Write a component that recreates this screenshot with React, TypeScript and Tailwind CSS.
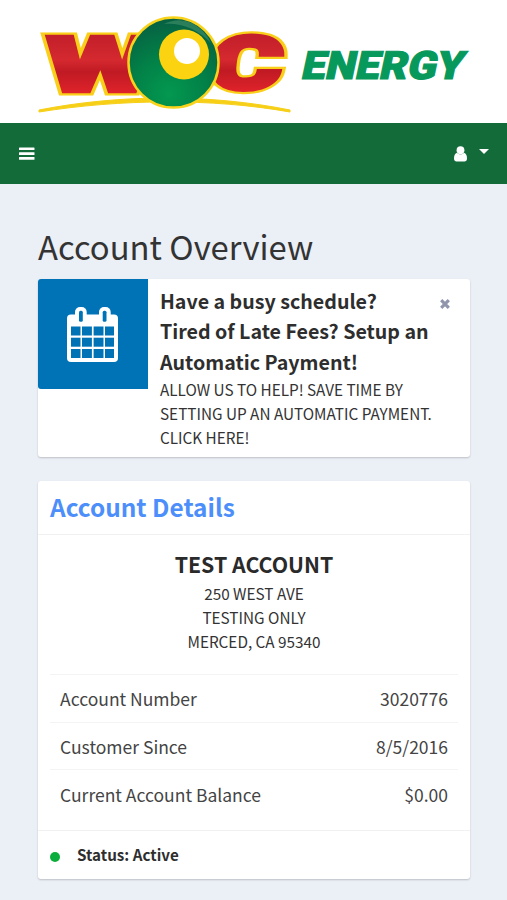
const details = [
  { label: "Account Number", value: "3020776" },
  { label: "Customer Since", value: "8/5/2016" },
  { label: "Current Account Balance", value: "$0.00" },
];

function LogoLetters() {
  return (
    <>
      <text x="0" y="0" fontSize="76" textLength="109" lengthAdjust="spacingAndGlyphs" transform="translate(45 90.500) skewX(-3)">
        W
      </text>
      <text x="0" y="0" fontSize="74" textLength="72" lengthAdjust="spacingAndGlyphs" transform="translate(207 89) skewX(-8)">
        C
      </text>
    </>
  );
}

function Logo() {
  return (
    <svg width="507" height="123" viewBox="0 0 507 123" role="img" aria-label="WOC Energy" className="block">
      <defs>
        <linearGradient id="red" x1="0" y1="0" x2="0" y2="1">
          <stop offset="0.2" stopColor="#c4202b" />
          <stop offset="0.45" stopColor="#d5292f" />
          <stop offset="0.58" stopColor="#c01a24" />
          <stop offset="0.85" stopColor="#e3242b" />
        </linearGradient>
        <radialGradient id="ball" cx="0.45" cy="0.85" r="0.85">
          <stop offset="0" stopColor="#039850" />
          <stop offset="0.5" stopColor="#028047" />
          <stop offset="1" stopColor="#075f42" />
        </radialGradient>
      </defs>
      <path d="M39 110C120 94 211 94 290 110L290 112C212 98 120 99 39 112Z" fill="#f6cf16" stroke="#f6cf16" strokeWidth="1" />
      <g fontFamily="Roboto, sans-serif" fontWeight="900">
        <g fill="#f9cf19" stroke="#f9cf19" strokeWidth="9" aria-hidden="true">
          <LogoLetters />
        </g>
        <g fill="url(#red)" stroke="url(#red)" strokeWidth="4.500">
          <LogoLetters />
        </g>
      </g>
      <ellipse cx="173.500" cy="62.500" rx="45" ry="45" fill="url(#ball)" stroke="#f9d31b" strokeWidth="2.500" />
      <path d="M164 24Q178 17 192 23Q206 31 211 43Q190 22 164 24Z" fill="#4f9a72" opacity="0.5" />
      <circle cx="184" cy="54.500" r="25" fill="#fbd310" />
      <circle cx="187" cy="51" r="13" fill="#fff" />
      <text
        x="0"
        y="0"
        fontFamily="Roboto, sans-serif"
        fontWeight="900"
        fontSize="39"
        textLength="162"
        lengthAdjust="spacingAndGlyphs"
        transform="translate(300 78.500) skewX(-12)"
        fill="#07985b"
        stroke="#07985b"
        strokeWidth="1.200"
      >
        ENERGY
      </text>
    </svg>
  );
}

function CalendarIcon() {
  return (
    <svg width="51" height="55" viewBox="0 0 51 55" className="-translate-x-px">
      <rect x="0" y="7.500" width="51" height="47.500" rx="4" fill="#fff" />
      <rect x="8" y="0" width="11.700" height="17" rx="5" fill="#fff" />
      <rect x="32" y="0" width="11.700" height="17" rx="5" fill="#fff" />
      <g fill="#0073b7">
        <rect x="12" y="3.700" width="3.800" height="11" rx="1.500" />
        <rect x="35.700" y="3.700" width="3.800" height="11" rx="1.500" />
        {[19.5, 30.7, 42].map((y) => (
          <g key={y}>
            <rect x="4" y={y} width="9.500" height="9" />
            <rect x="15" y={y} width="9.900" height="9" />
            <rect x="26.600" y={y} width="9.900" height="9" />
            <rect x="38" y={y} width="9" height="9" />
          </g>
        ))}
      </g>
    </svg>
  );
}

function NavBar() {
  return (
    <nav className="flex h-[61px] items-center justify-between bg-[#136b3a] pl-[19px] pr-[18px]">
      <button aria-label="Toggle navigation">
        <svg width="16" height="14" viewBox="0 0 16 14" fill="#fff" className="block">
          <rect y="0.500" width="15.500" height="2.600" rx="0.500" />
          <rect y="5.300" width="15.500" height="2.600" rx="0.500" />
          <rect y="10.100" width="15.500" height="2.600" rx="0.500" />
        </svg>
      </button>
      <button aria-label="User menu" className="flex items-start gap-3">
        <svg width="13" height="16" viewBox="0 0 13 16" fill="#fff" className="block">
          <circle cx="6.500" cy="4.200" r="3.900" />
          <path d="M3 6.800C1 7.300 0 9.500 0 12.500C0 14.600 1 15.500 2.600 15.500H10.400C12 15.500 13 14.600 13 12.500C13 9.500 12 7.300 10 6.800C8 8.800 5 8.800 3 6.800Z" />
        </svg>
        <svg width="10" height="5" viewBox="0 0 10 5" fill="#fff" className="mt-[3px] block">
          <path d="M0 0H10L5 5Z" />
        </svg>
      </button>
    </nav>
  );
}

export default function App() {
  return (
    <div className="h-[900px] overflow-hidden bg-[#ebeff6] font-['Noto_Sans_CJK_SC',sans-serif] text-[#333]">
      <header className="h-[123px] bg-white">
        <Logo />
      </header>
      <NavBar />

      <main className="pl-[38px] pr-[37px] pt-[41px]">
        <h1 className="h-[54px] whitespace-nowrap text-[32.800px] font-normal leading-[41px] text-[#333]">Account Overview</h1>

        {/* Automatic payment notice */}
        <section className="flex h-[178px] rounded-[3px] bg-white shadow-[0_1px_2px_rgba(0,0,0,0.2)]">
          <div className="flex h-[110px] w-[110px] shrink-0 items-center justify-center rounded-l-[3px] bg-[#0073b7]">
            <CalendarIcon />
          </div>
          <div className="min-w-0 flex-1 whitespace-nowrap pl-3 pt-[7px]">
            <h2 className="text-[19.650px] font-bold leading-[30.400px] text-[#2e2e2e]">
              Have a busy schedule?
              <br />
              Tired of Late Fees? Setup an
              <br />
              Automatic Payment!
            </h2>
            <p className="-mt-[0.700px] text-[15.300px] leading-[24.300px]">
              ALLOW US TO HELP! SAVE TIME BY
              <br />
              SETTING UP AN AUTOMATIC PAYMENT.
              <br />
              CLICK HERE!
            </p>
          </div>
          <button aria-label="Dismiss" className="mr-5 mt-5 h-[10px] w-[10px]">
            <svg width="10" height="10" viewBox="0 0 10 10" stroke="#9196ad" strokeWidth="3.200" className="block">
              <path d="M1.200 1.200L8.800 8.800M8.800 1.200L1.200 8.800" />
            </svg>
          </button>
        </section>

        {/* Account details */}
        <section className="mt-6 h-[398px] rounded-[3px] bg-white shadow-[0_1px_2px_rgba(0,0,0,0.2)]">
          <h2 className="h-[54px] border-b border-[#f1f1f1] pl-3 text-[24.400px] font-bold leading-[51px] text-[#4c8efa]">
            Account Details
          </h2>
          <div className="h-[295px] px-3 pt-[13px]">
            <div className="h-[126px] text-center text-[15.300px] leading-[24.300px]">
              <h3 className="mb-[0.500px] text-[21.300px] font-bold leading-[32px] text-[#2a2a2a]">TEST ACCOUNT</h3>
              <p>250 WEST AVE</p>
              <p>TESTING ONLY</p>
              <p>MERCED, CA 95340</p>
            </div>
            <ul>
              {details.map((row) => (
                <li
                  key={row.label}
                  className="flex h-[47.700px] items-center justify-between border-t border-[#f4f4f4] px-[10px] pt-[2px] text-[17.500px] text-[#444]"
                >
                  <span>{row.label}</span>
                  <span>{row.value}</span>
                </li>
              ))}
            </ul>
          </div>
          <footer className="flex h-[49px] items-center border-t border-[#f1f1f1] pb-[2px] pl-3 text-[15.200px] font-bold text-[#2e2e2e]">
            <span className="mr-[17px] mt-[5px] h-[10px] w-[10px] rounded-full bg-[#0bae3c]" />
            Status: Active
          </footer>
        </section>
      </main>
    </div>
  );
}
